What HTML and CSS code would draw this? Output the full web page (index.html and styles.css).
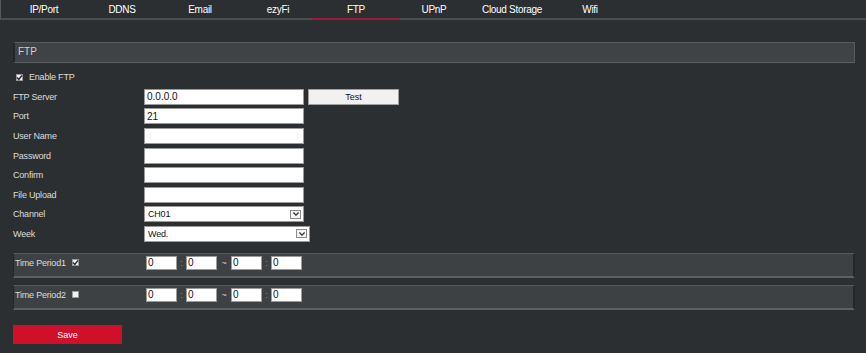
FILE: index.html
```html
<!DOCTYPE html>
<html>
<head>
<meta charset="utf-8">
<link rel="stylesheet" href="styles.css">
</head>
<body>
<nav class="tabs">
  <a class="tab">IP/Port</a>
  <a class="tab">DDNS</a>
  <a class="tab">Email</a>
  <a class="tab">ezyFi</a>
  <a class="tab active">FTP</a>
  <a class="tab">UPnP</a>
  <a class="tab">Cloud Storage</a>
  <a class="tab">Wifi</a>
</nav>
<main class="content">
  <div class="section-title">FTP</div>
  <div class="form">
    <div class="row enable">
      <span class="cb checked"><svg viewBox="0 0 7 7"><path d="M1 3.6 L2.8 5.4 L6 1.4" fill="none" stroke="#222" stroke-width="1.4"/></svg></span>
      <span class="cb-text">Enable FTP</span>
    </div>
    <div class="row">
      <span class="label">FTP Server</span>
      <input class="field" type="text" value="0.0.0.0">
      <button class="test-btn">Test</button>
    </div>
    <div class="row">
      <span class="label">Port</span>
      <input class="field" type="text" value="21">
    </div>
    <div class="row">
      <span class="label">User Name</span>
      <input class="field" type="text" value="">
    </div>
    <div class="row">
      <span class="label">Password</span>
      <input class="field" type="password" value="">
    </div>
    <div class="row">
      <span class="label">Confirm</span>
      <input class="field" type="password" value="">
    </div>
    <div class="row">
      <span class="label">File Upload</span>
      <input class="field" type="text" value="">
    </div>
    <div class="row">
      <span class="label">Channel</span>
      <div class="select">
        <span class="select-text">CH01</span>
        <span class="arrow"><svg viewBox="0 0 9 7"><path d="M1.5 1.8 L4.5 4.8 L7.5 1.8" fill="none" stroke="#333" stroke-width="1.5"/></svg></span>
      </div>
    </div>
    <div class="row">
      <span class="label">Week</span>
      <div class="select wide">
        <span class="select-text">Wed.</span>
        <span class="arrow"><svg viewBox="0 0 9 7"><path d="M1.5 1.8 L4.5 4.8 L7.5 1.8" fill="none" stroke="#333" stroke-width="1.5"/></svg></span>
      </div>
    </div>
  </div>

  <div class="period first">
    <div class="period-label">
      <span>Time Period1</span>
      <span class="cb checked"><svg viewBox="0 0 7 7"><path d="M1 3.6 L2.8 5.4 L6 1.4" fill="none" stroke="#222" stroke-width="1.4"/></svg></span>
    </div>
    <input class="time" type="text" value="0">
    <span class="sep">:</span>
    <input class="time" type="text" value="0">
    <span class="sep tilde">~</span>
    <input class="time" type="text" value="0">
    <span class="sep">:</span>
    <input class="time" type="text" value="0">
  </div>
  <div class="period">
    <div class="period-label">
      <span>Time Period2</span>
      <span class="cb"></span>
    </div>
    <input class="time" type="text" value="0">
    <span class="sep">:</span>
    <input class="time" type="text" value="0">
    <span class="sep tilde">~</span>
    <input class="time" type="text" value="0">
    <span class="sep">:</span>
    <input class="time" type="text" value="0">
  </div>

  <button class="save-btn">Save</button>
</main>
</body>
</html>
```
FILE: styles.css
```css
* { box-sizing: border-box; }
html, body {
  margin: 0;
  padding: 0;
  background: #2c2f32;
  font-family: "Liberation Sans", Arial, sans-serif;
  color: #dcdcdc;
}
body { width: 866px; height: 353px; overflow: hidden; }

.tabs {
  display: flex;
  height: 20px;
  padding-left: 4px;
  border-bottom: 2px solid #4a4e51;
  border-left: 1px solid #55595c;
}
.tab {
  position: relative;
  width: 78px;
  height: 18px;
  line-height: 19px;
  text-align: center;
  font-size: 10px;
  letter-spacing: -0.3px;
  color: #ffffff;
}
.tab.active::after {
  content: "";
  position: absolute;
  left: -5px;
  right: -5px;
  bottom: -2px;
  height: 2px;
  background: #9c1a3b;
}

.content {
  padding: 22px 11px 0 13px;
}
.section-title {
  height: 21px;
  background: #404345;
  border: 1px solid #575b5e;
  border-left: 2px solid #222528;
  border-bottom-color: #5d6164;
  padding-left: 3px;
  line-height: 18px;
  font-size: 10px;
  color: #cfcfcf;
}

.form {
  margin-top: 4.4px;
  display: flex;
  flex-direction: column;
}
.row {
  display: flex;
  align-items: center;
  height: 19.6px;
  font-size: 9px;
  letter-spacing: -0.2px;
}
.label { width: 131px; }
.enable { padding-left: 3px; }
.cb-text { margin-left: 6px; }

.cb {
  display: inline-block;
  width: 7px;
  height: 7px;
  background: #f2f2f2;
  border: 1px solid #9a9a9a;
  position: relative;
}
.cb svg {
  position: absolute;
  left: -1px;
  top: -1px;
  width: 7px;
  height: 7px;
}

.field {
  width: 160px;
  height: 16px;
  margin: 0;
  padding: 0 2px;
  background: #ffffff;
  border: 1px solid #9b9b9b;
  font-family: "Liberation Sans", Arial, sans-serif;
  font-size: 10px;
  color: #111;
  outline: none;
}
.test-btn {
  margin: 0 0 0 4px;
  width: 91px;
  height: 16px;
  padding: 0;
  background: #f1f1f1;
  border: 1px solid #a0a0a0;
  font-family: "Liberation Sans", Arial, sans-serif;
  font-size: 9px;
  color: #111;
}

.select {
  width: 160px;
  height: 16px;
  background: #fff;
  border: 1px solid #9b9b9b;
  display: flex;
  align-items: center;
  justify-content: space-between;
  padding: 0 2px 0 3px;
  font-size: 9px;
  color: #111;
}
.select.wide { width: 166px; height: 16px; }
.arrow {
  width: 11px;
  height: 9px;
  border: 1px solid #8c8c8c;
  background: #f4f4f4;
  display: flex;
  align-items: center;
  justify-content: center;
}
.arrow svg { width: 8px; height: 6px; }

.period {
  display: flex;
  align-items: center;
  height: 25px;
  padding-bottom: 5px;
  margin-top: 7px;
  background: #3e4143;
  border-top: 1px solid #575b5e;
  border-bottom: 2px solid #5b5f62;
  border-left: 1px solid #25282a;
  border-right: 2px solid #25282a;
  font-size: 9px;
  letter-spacing: -0.2px;
}
.period.first { margin-top: 9.5px; }
.period-label {
  width: 132px;
  padding-left: 1px;
  display: flex;
  align-items: center;
  gap: 6px;
}
.time {
  width: 31px;
  height: 14px;
  margin: 0;
  padding: 0 1px;
  background: #fff;
  border: 1px solid #9b9b9b;
  font-family: "Liberation Sans", Arial, sans-serif;
  font-size: 10px;
  color: #111;
  outline: none;
}
.sep {
  width: 9px;
  text-align: center;
  color: #8a8d8f;
  font-size: 9px;
}
.sep.tilde {
  width: 14px;
  color: #d0d0d0;
}

.save-btn {
  display: block;
  margin-top: 15px;
  width: 109px;
  height: 19px;
  padding: 0;
  background: #d0102b;
  border: none;
  color: #fff;
  font-family: "Liberation Sans", Arial, sans-serif;
  font-size: 9px;
}
```
